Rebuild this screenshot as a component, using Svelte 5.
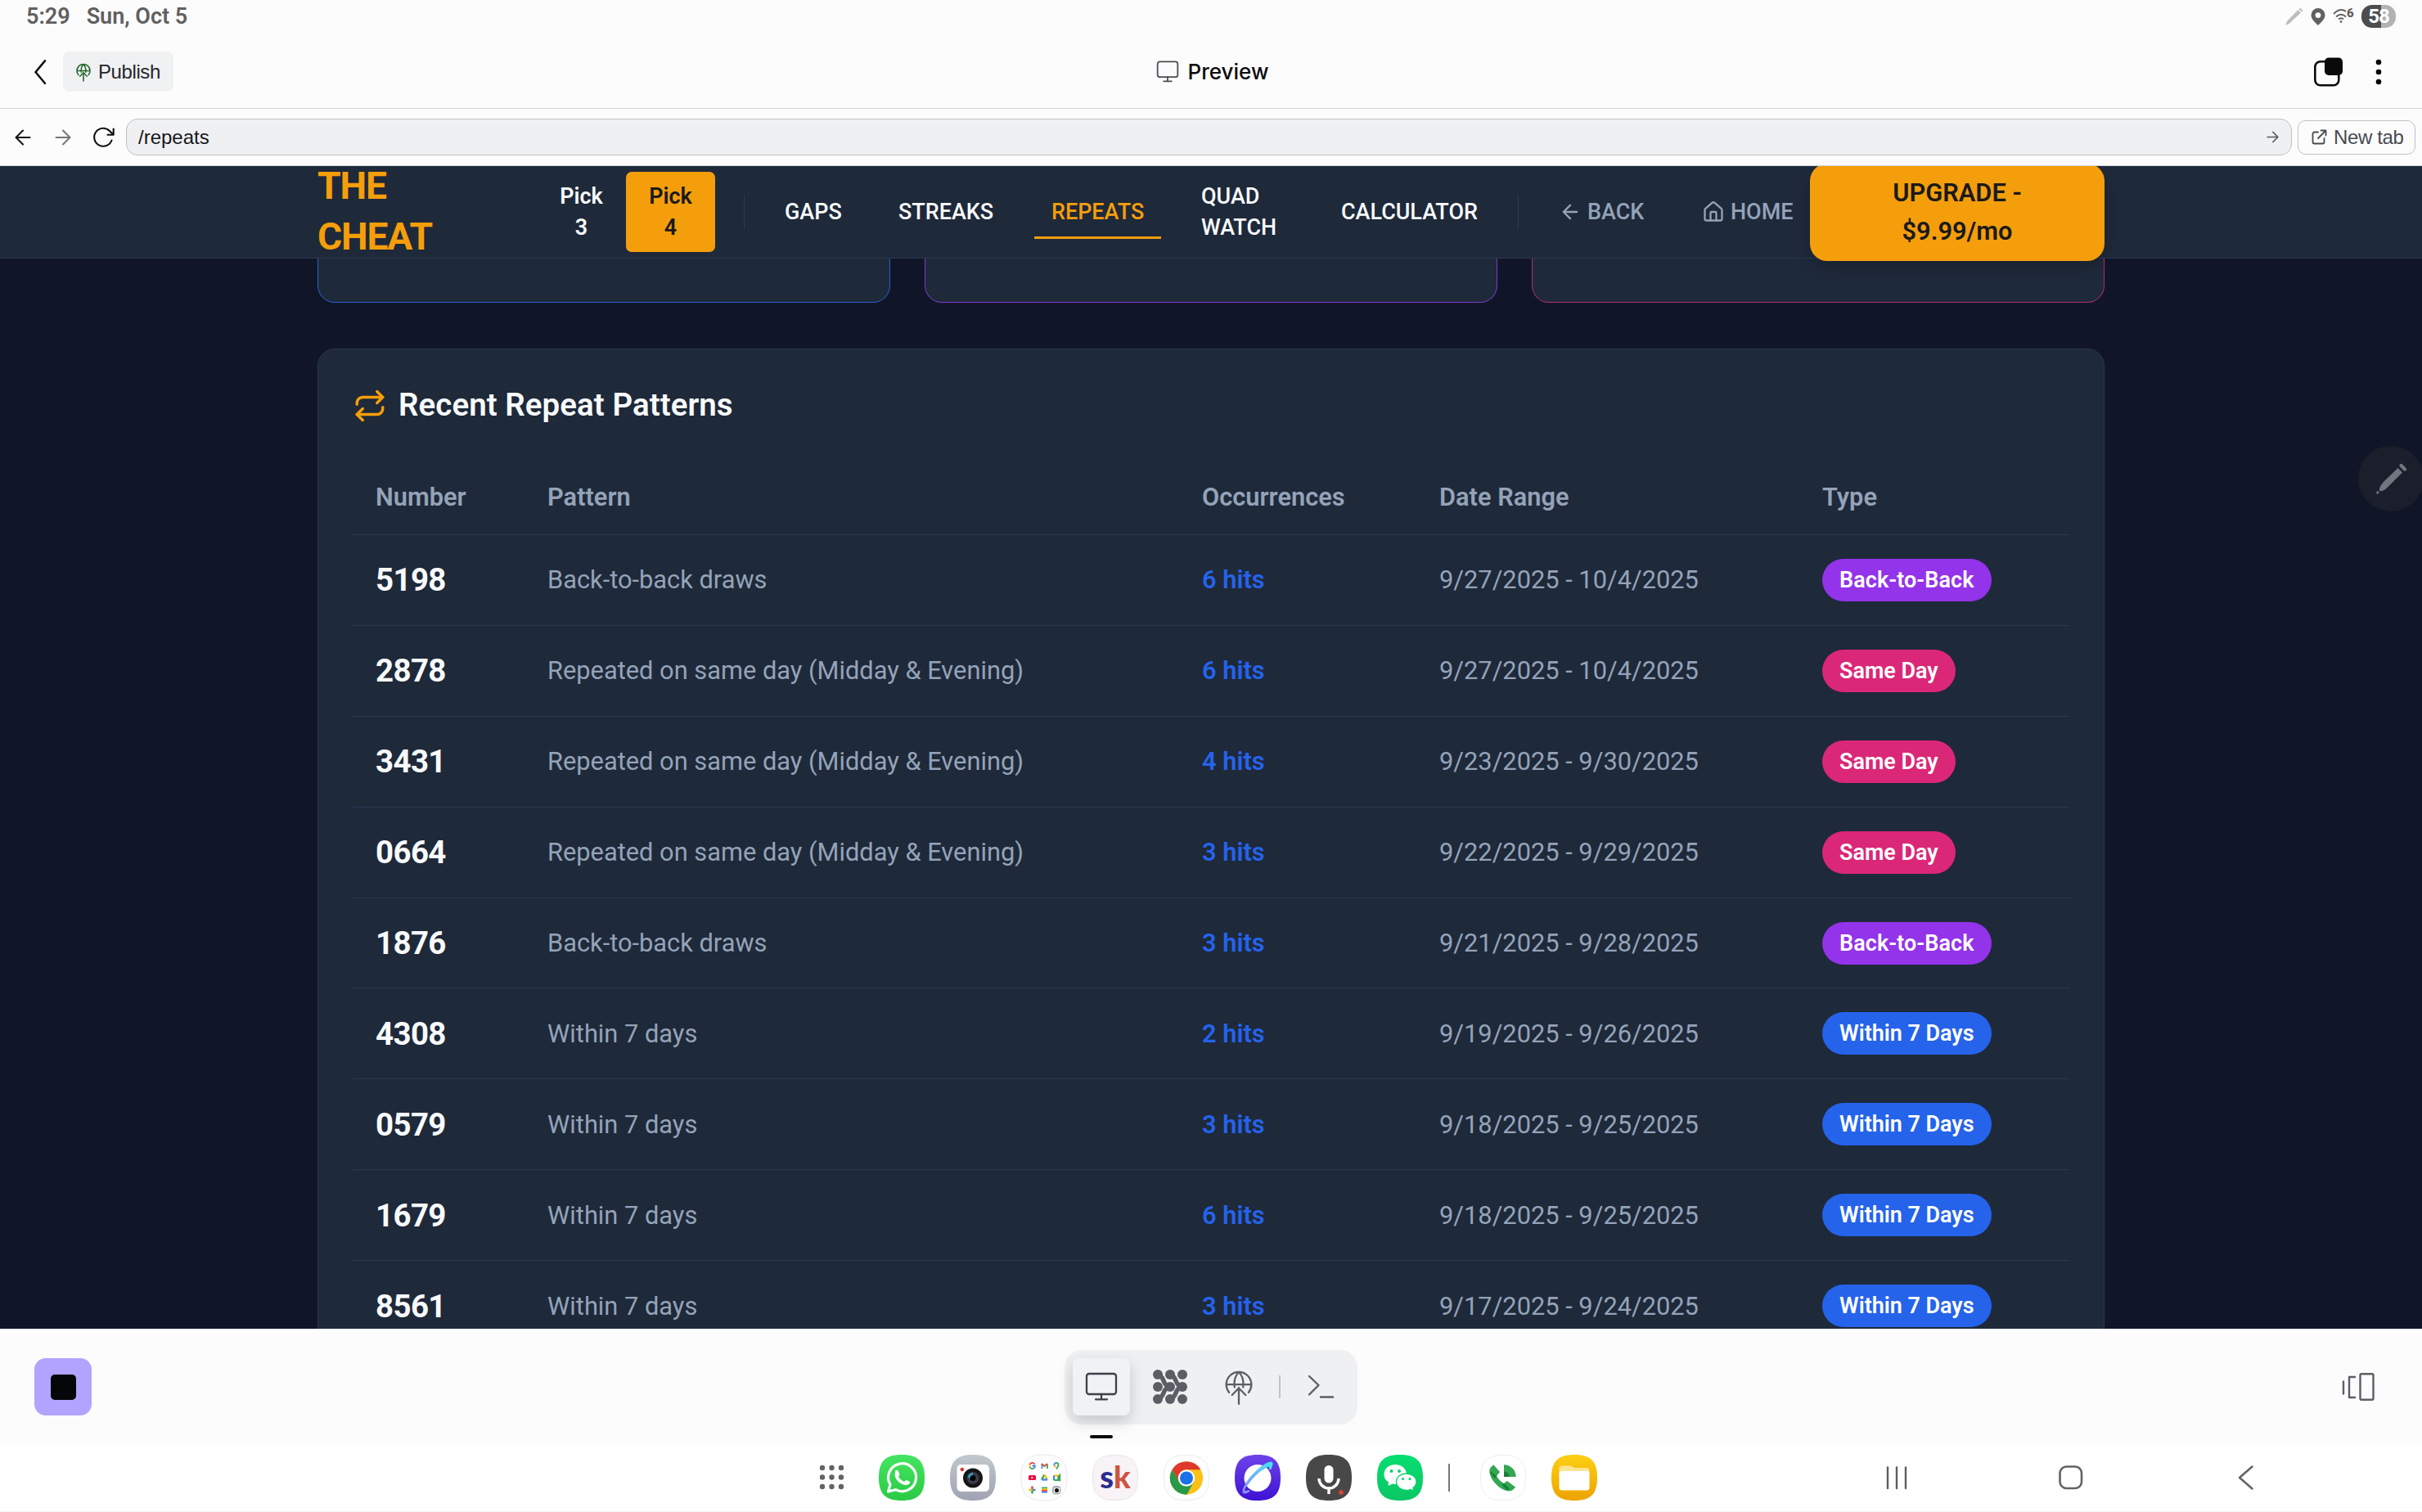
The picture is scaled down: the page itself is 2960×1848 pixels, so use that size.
<script>
  const pairs = [
    ['5198', 'b', 6, '9/27/2025 - 10/4/2025'],
    ['2878', 's', 6, '9/27/2025 - 10/4/2025'],
    ['3431', 's', 4, '9/23/2025 - 9/30/2025'],
    ['0664', 's', 3, '9/22/2025 - 9/29/2025'],
    ['1876', 'b', 3, '9/21/2025 - 9/28/2025'],
    ['4308', 'w', 2, '9/19/2025 - 9/26/2025'],
    ['0579', 'w', 3, '9/18/2025 - 9/25/2025'],
    ['1679', 'w', 6, '9/18/2025 - 9/25/2025'],
    ['8561', 'w', 3, '9/17/2025 - 9/24/2025']
  ];
  const kinds = {
    b: { text: 'Back-to-back draws', label: 'Back-to-Back', cls: 'purple' },
    s: { text: 'Repeated on same day (Midday & Evening)', label: 'Same Day', cls: 'pink' },
    w: { text: 'Within 7 days', label: 'Within 7 Days', cls: 'blue' }
  };
  const rows = pairs.map(([num, k, hits, range]) => ({ num, hits, range, ...kinds[k] }));
  const squircle = 'M28 0C48 0 56 8 56 28S48 56 28 56 0 48 0 28 8 0 28 0Z';
  const dots = [4, 15.5, 27];
</script>

{#snippet globe()}
  <path d="M5.8 16.6A8 8 0 1 1 18.2 16.6M4.2 11.5H19.8M9.3 13.2C8.8 9.5 9.6 6 12 3.6M14.7 13.2C15.2 9.5 14.4 6 12 3.6M12 24V13.6M7.7 18.2L12 13.8L16.3 18.2" />
{/snippet}
{#snippet monitor()}
  <rect x="1" y="1" width="36" height="25" rx="3" /><path d="M19 26V32M12 32.3H26" />
{/snippet}

<div class="screen">
  <div class="status">
    <span class="time">5:29</span><span class="date">Sun, Oct 5</span>
    <div class="status-icons">
      <svg class="s-pen" width="22" height="22" viewBox="0 0 22 22"><path d="M0 22L2 17L15.500 3L19 6.500L5 19.500ZM16.500 2L18 .5L21.500 4L20 5.500Z" fill="#bdbdbd" /></svg>
      <svg class="s-pin" width="18" height="21" viewBox="0 0 18 21"><path fill-rule="evenodd" fill="#606060" d="M9 0a8.500 8.500 0 0 1 8.500 8.500C17.500 13 13 17 9 21C5 17 .5 13 .5 8.500A8.500 8.500 0 0 1 9 0ZM9 5.200a3.400 3.400 0 1 0 0 6.800a3.400 3.400 0 0 0 0-6.800Z" /></svg>
      <div class="wifi">
        <svg width="20" height="18" viewBox="0 0 20 18" fill="none" stroke="#606060" stroke-width="2"><path d="M1 6Q9 -2 16 3M4 9.500Q10 4 16 9.500M7 12.500Q10 10 13 12.500" /><circle cx="10" cy="15.500" r="1" fill="#606060" stroke-width="1" /></svg>
        <b>6</b>
      </div>
      <div class="battery">58</div>
    </div>
  </div>

  <header class="appbar">
    <svg class="chev" width="16" height="26" viewBox="0 0 16 26" fill="none" stroke="#0b0b0b" stroke-width="2.600" stroke-linecap="round" stroke-linejoin="round"><path d="M14 -2.500L2.500 13L14 28.500" transform="translate(0 1.500) scale(1 .89)" /></svg>
    <div class="publish">
      <svg width="24" height="26" viewBox="0 0 24 26" fill="none" stroke="#27692e" stroke-width="1.600" stroke-linecap="round">{@render globe()}</svg>
      <span>Publish</span>
    </div>
    <div class="title">
      <svg width="26" height="24" viewBox="0 0 38 35" fill="none" stroke="#4a4c55" stroke-width="2.600" stroke-linecap="round"><rect x="1" y="-1" width="36" height="27.500" rx="4" /><path d="M19 26V33M12 34H26" /></svg>
      <span>Preview</span>
    </div>
    <svg class="multi" width="36" height="36" viewBox="0 0 36 36"><rect x="1.300" y="5.300" width="29" height="29" rx="6.500" fill="none" stroke="#0a0a0a" stroke-width="2.600" /><rect x="13" y=".5" width="22" height="21.500" rx="5" fill="#0a0a0a" /></svg>
    <svg class="dots" width="8" height="32" viewBox="0 0 8 32"><circle cx="4" cy="4" r="3.300" /><circle cx="4" cy="16" r="3.300" /><circle cx="4" cy="28" r="3.300" /></svg>
  </header>

  <div class="browser">
    <svg class="b-back" width="20" height="20" viewBox="0 0 20 20" fill="none" stroke="#111" stroke-width="2" stroke-linecap="round" stroke-linejoin="round"><path d="M18.500 10H1.500M10 1.500L1.500 10L10 18.500" /></svg>
    <svg class="b-fwd" width="20" height="20" viewBox="0 0 20 20" fill="none" stroke="#73757d" stroke-width="2" stroke-linecap="round" stroke-linejoin="round"><path d="M1.500 10H18.500M10 1.500L18.500 10L10 18.500" /></svg>
    <svg class="b-load" width="28" height="26" viewBox="0 0 28 26" fill="none" stroke="#111" stroke-width="2.100" stroke-linecap="round" stroke-linejoin="round"><path d="M23.500 16.500A11 11 0 1 1 21 5L25.500 9.500M25.700 2.500V9.700H18.500" /></svg>
    <div class="url">
      <span>/repeats</span>
      <svg width="15" height="15" viewBox="0 0 20 20" fill="none" stroke="#55575e" stroke-width="2.200" stroke-linecap="round" stroke-linejoin="round"><path d="M1.500 10H18.500M10.500 2L18.500 10L10.500 18" /></svg>
    </div>
    <div class="newtab">
      <svg width="19" height="19" viewBox="0 0 19 19" fill="none" stroke="#484a52" stroke-width="1.800" stroke-linecap="round" stroke-linejoin="round"><path d="M8 3.500H3.500A2 2 0 0 0 1.500 5.500V15.500A2 2 0 0 0 3.500 17.500H13.500A2 2 0 0 0 15.500 15.500V11M11.500 1.500H17.500V7.500M17 2L8 11" /></svg>
      <span>New tab</span>
    </div>
  </div>

  <main class="web">
    <nav class="nav">
      <div class="logo">THE<br />CHEAT</div>
      <div class="pick">Pick<br />3</div>
      <div class="pick on">Pick<br />4</div>
      <i class="sep first"></i>
      <div class="link gaps">GAPS</div>
      <div class="link streaks">STREAKS</div>
      <div class="link repeats">REPEATS</div>
      <div class="link quad">QUAD<br />WATCH</div>
      <div class="link calc">CALCULATOR</div>
      <i class="sep second"></i>
      <div class="util back">
        <svg width="28" height="28" viewBox="0 0 24 24" fill="none" stroke="currentColor" stroke-width="2" stroke-linecap="round" stroke-linejoin="round"><path d="M12 19L5 12L12 5M19 12H5" /></svg>
        BACK
      </div>
      <div class="util home">
        <svg width="28" height="28" viewBox="0 0 24 24" fill="none" stroke="currentColor" stroke-width="2" stroke-linecap="round" stroke-linejoin="round"><path d="M15 21v-8a1 1 0 0 0-1-1h-4a1 1 0 0 0-1 1v8" /><path d="M3 10a2 2 0 0 1 .709-1.528l7-5.999a2 2 0 0 1 2.582 0l7 5.999A2 2 0 0 1 21 10v9a2 2 0 0 1-2 2H5a2 2 0 0 1-2-2z" /></svg>
        HOME
      </div>
      <div class="upgrade">UPGRADE -<br />$9.99/mo</div>
    </nav>

    <div class="cards">
      <div class="card c1"></div>
      <div class="card c2"></div>
      <div class="card c3"></div>
    </div>

    <section class="panel">
      <h2>
        <svg width="42" height="42" viewBox="0 0 24 24" fill="none" stroke="#f59e0b" stroke-width="2" stroke-linecap="round" stroke-linejoin="round"><path d="m17 2 4 4-4 4" /><path d="M3 11v-1a4 4 0 0 1 4-4h14" /><path d="m7 22-4-4 4-4" /><path d="M21 13v1a4 4 0 0 1-4 4H3" /></svg>
        <span>Recent Repeat Patterns</span>
      </h2>
      <div class="row head"><span>Number</span><span>Pattern</span><span>Occurrences</span><span>Date Range</span><span>Type</span></div>
      {#each rows as r}
        <div class="row">
          <span class="num">{r.num}</span>
          <span>{r.text}</span>
          <span class="hits">{r.hits} hits</span>
          <span>{r.range}</span>
          <span><b class="pill {r.cls}">{r.label}</b></span>
        </div>
      {/each}
    </section>
  </main>

  <footer class="tools">
    <div class="stop"><i></i></div>
    <div class="dock">
      <div class="tile on"><svg width="38" height="35" viewBox="0 0 38 35" fill="none" stroke="#3d3f48" stroke-width="2.300" stroke-linecap="round">{@render monitor()}</svg></div>
      <div class="tile">
        <svg width="42" height="42" viewBox="0 0 42 42" fill="#5c5e66" stroke="#5c5e66" stroke-linecap="round">
          {#each [6, 21, 36] as y}{#each [6, 21, 36] as x}<circle cx={x} cy={y} r="6" stroke="none" />{/each}{/each}
          <path d="M6 6C15 8 11 19 20 21C11 23 15 34 6 36M21 6C30 8 26 19 35 21C26 23 30 34 21 36" fill="none" stroke-width="5.500" />
        </svg>
      </div>
      <div class="tile"><svg width="46" height="50" viewBox="0 0 24 26" fill="none" stroke="#5c5e66" stroke-width="1.200" stroke-linecap="round">{@render globe()}</svg></div>
      <i class="bar"></i>
      <div class="tile term"><svg width="32" height="30" viewBox="0 0 32 30" fill="none" stroke="#5c5e66" stroke-width="2.400" stroke-linecap="round" stroke-linejoin="round"><path d="M2 2L13.500 13L2 24.500M16 27.500H31" /></svg></div>
    </div>
    <svg class="split" width="40" height="34" viewBox="0 0 40 34" fill="none" stroke="#5c5e68" stroke-width="2.400" stroke-linecap="round" stroke-linejoin="round"><path d="M2 10.500V25.500M16 5H9V30H16" /><rect x="22.500" y="1.200" width="16" height="31.500" rx="1.500" /></svg>
  </footer>

  <div class="sysbar">
    <svg class="ico a-grid" width="31" height="31" viewBox="0 0 31 31" fill="#636363">{#each dots as y}{#each dots as x}<circle cx={x} cy={y} r="3.200" />{/each}{/each}</svg>
    <svg class="ico" width="56" height="56" viewBox="0 0 56 56">
      <defs><linearGradient id="wa" x2="0" y2="1"><stop stop-color="#45e561" /><stop offset="1" stop-color="#2bca45" /></linearGradient></defs>
      <path d={squircle} fill="url(#wa)" /><path d="M11.500 45L14 36.500A17 17 0 1 1 20.500 42.700Z" fill="none" stroke="#fff" stroke-width="3.200" stroke-linejoin="round" />
      <path d="M20 21C20 19 22 18 23.500 19.500L25.500 24C25 26 23.500 26 24.500 27.500C26.500 30.500 28 31.500 31 33C32 32.500 32.500 31 34 31L38 33C38.500 36 34.500 37.500 32 37C25 35.500 20 29.500 19.500 25Z" fill="#fff" />
    </svg>
    <svg class="ico" width="56" height="56" viewBox="0 0 56 56">
      <defs><linearGradient id="cam" x2="0" y2="1"><stop stop-color="#c0c9cc" /><stop offset="1" stop-color="#a0a2b3" /></linearGradient></defs>
      <path d={squircle} fill="url(#cam)" /><rect x="8.500" y="12" width="39.500" height="33" rx="5" fill="#fff" /><circle cx="28" cy="28.500" r="12" fill="#161616" /><circle cx="28" cy="28.500" r="7.500" fill="#3c3a48" /><path d="M22 28A6 6 0 0 1 28 22V26L25 29Z" fill="#2ba6c4" /><circle cx="28" cy="28.500" r="3.500" fill="#000" /><circle cx="14.800" cy="18" r="2.200" fill="#d93030" />
    </svg>
    <svg class="ico folder" width="58" height="58" viewBox="-1 -1 58 58">
      <path d={squircle} fill="#fdfdff" stroke="#e8e8ee" />
      <g transform="translate(8.500 8.500)" stroke-width="1.800" fill="none">
        <path d="M8 3A3.300 3.300 0 0 0 2 3.500" stroke="#ea4335" /><path d="M2 3.500V6.500" stroke="#fbbc05" /><path d="M2 6.500A3.400 3.400 0 0 0 7 8" stroke="#34a853" /><path d="M5 5H8.500A4 4 0 0 1 7 8" stroke="#4285f4" />
        <path d="M17 8.500V3" stroke="#4285f4" /><path d="M16.500 2.500L20 5.500L23.500 2.500" stroke="#ea4335" /><path d="M23.500 8.500V3" stroke="#34a853" />
        <path d="M34.500 1.200A3.300 3.300 0 0 1 37 5L34.500 9" stroke="#34a853" /><path d="M34.500 1.200A3.300 3.300 0 0 0 32 5" stroke="#4285f4" /><path d="M32 4.500L33.500 7" stroke="#fbbc05" />
        <rect x=".5" y="16.500" width="9" height="6" rx="1.500" fill="#f2083d" stroke="none" /><path d="M4 18L6.500 19.500L4 21Z" fill="#fff" stroke="none" />
        <path d="M19.800 16L16.500 22" stroke="#34a853" stroke-width="2.400" /><path d="M20 16L23.500 22" stroke="#fbbc05" stroke-width="2.400" /><path d="M17 22H23.500" stroke="#4285f4" stroke-width="2.400" />
        <path d="M31.500 17H37V19.500" stroke="#fbbc05" stroke-width="2.200" /><path d="M31.500 17V22.500" stroke="#4285f4" stroke-width="2.200" /><path d="M31.500 22.500H37V20.500L38.500 22V17L37 19" stroke="#34a853" stroke-width="2.200" />
        <path d="M5 34V30" stroke="#ea4335" stroke-width="2.500" /><path d="M5 34.500H9" stroke="#4285f4" stroke-width="2.500" /><path d="M5 34.500V39" stroke="#34a853" stroke-width="2.500" /><path d="M5 34.500H1" stroke="#fbbc05" stroke-width="2.500" />
        <path d="M16.500 32H23.500" stroke="#34a853" /><path d="M16.500 33.800H23.500" stroke="#fbbc05" /><path d="M16.500 35.500H23.500" stroke="#ea4335" /><path d="M16.500 37.200H23.500" stroke="#4285f4" />
        <rect x="29.500" y="29.500" width="10.500" height="10.500" rx="4" fill="#a9acb8" stroke="none" /><rect x="31.500" y="32" width="7" height="6" fill="#fff" stroke="none" /><circle cx="35" cy="35" r="2.600" fill="#111" stroke="none" />
      </g>
    </svg>
    <div class="ico sk"><svg width="56" height="56" viewBox="-.5 -.5 57 57"><path d={squircle} fill="#f8f3f7" stroke="#e8e2e8" /></svg><span><b>s</b><b class="k">k</b></span></div>
    <svg class="ico" width="56" height="56" viewBox="-.5 -.5 57 57">
      <path d={squircle} fill="#fff" stroke="#e9e9e9" />
      <circle cx="28" cy="28.500" r="20.500" fill="#fbc116" /><path d="M10.200 18.200A20.500 20.500 0 0 1 45.800 18.200H28A10.500 10.500 0 0 0 19 33.500Z" fill="#dd3a2c" /><path d="M10.200 18.200L19 33.500A10.500 10.500 0 0 0 37 33.500L28.500 49A20.500 20.500 0 0 1 10.200 18.200Z" fill="#28984a" /><circle cx="28" cy="28.500" r="10.300" fill="#fff" /><circle cx="28" cy="28.500" r="8.200" fill="#1b72e8" />
    </svg>
    <svg class="ico" width="56" height="56" viewBox="0 0 56 56">
      <defs><linearGradient id="net" x2="0" y2="1"><stop stop-color="#6f43ea" /><stop offset="1" stop-color="#3d12d2" /></linearGradient><linearGradient id="ring" x1="1" y1="0" x2="0" y2="1"><stop stop-color="#45e4f1" /><stop offset="1" stop-color="#8b8cf8" /></linearGradient></defs>
      <path d={squircle} fill="url(#net)" /><circle cx="28" cy="28.500" r="16.500" fill="#fff" /><path d="M43 18C46 11 46 9 43 10C36 11 18 27 12 40C9 47 11 48 18 44C10 48 9 43 15 36C23 25 32 18 38 15C43 12 44 14 43 18Z" fill="url(#ring)" stroke="url(#ring)" stroke-width="2.500" />
    </svg>
    <svg class="ico" width="56" height="56" viewBox="0 0 56 56"><path d={squircle} fill="#484848" /><rect x="22.500" y="13" width="11" height="21.500" rx="5.500" fill="#fff" /><path d="M16 29A12 12 0 0 0 40 29M28 41V48" fill="none" stroke="#fff" stroke-width="3.400" /><circle cx="43" cy="46" r="2.800" fill="#e34234" /></svg>
    <svg class="ico" width="56" height="56" viewBox="0 0 56 56">
      <defs><linearGradient id="wc" x2="0" y2="1"><stop stop-color="#08de70" /><stop offset="1" stop-color="#0ac665" /></linearGradient></defs>
      <path d={squircle} fill="url(#wc)" /><path d="M22 12C30 12 36 17 36 24S30 36 22 36L19 35.500L13.500 38L14 33.500C10 31 8.500 28 8.500 24C8.500 17 14 12 22 12Z" fill="#fff" /><path d="M35.500 23C42 23 48 27 48 33C48 36 46.500 38.500 44 40.500L44.500 44L40.500 42.500Q38 43.500 35.500 43.500C29 43.500 23.500 39 23.500 33S29 23 35.500 23Z" fill="#fff" stroke="#09d26b" stroke-width="1.300" />
      <g fill="#09d26b"><circle cx="17.500" cy="20" r="2" /><circle cx="27" cy="20" r="2" /><circle cx="31.500" cy="29.500" r="1.600" /><circle cx="40" cy="29.500" r="1.600" /></g>
    </svg>
    <i class="sys-sep"></i>
    <svg class="ico" width="56" height="56" viewBox="-.5 -.5 57 57"><path d={squircle} fill="#fff" stroke="#ececec" /><path d="M29 12A15 15 0 0 1 44 27H29Z" fill="#35a652" /><path d="M29 20A8 8 0 0 1 36 27H29Z" fill="#188038" /><path d="M12 16L16 12L24 21L20 26C22 30 25 33 29 35L33 32L43.500 40L39 44C34 46.500 26 43 20 37C13 30 9 21 12 16Z" fill="#35a652" /><path d="M12 20L20 26L17.500 29L12 22ZM29 35L36.500 42L32 43.500L26.500 37Z" fill="#188038" /></svg>
    <svg class="ico" width="56" height="56" viewBox="0 0 56 56">
      <defs><linearGradient id="fo" x2="0" y2="1"><stop stop-color="#fdcf14" /><stop offset="1" stop-color="#eda300" /></linearGradient></defs>
      <path d={squircle} fill="url(#fo)" /><path d="M9.500 26V17A3.500 3.500 0 0 1 13 13.500H23C26 13.500 26 16 29 16H43A3.500 3.500 0 0 1 46.500 19.500V26Z" fill="#fee491" /><rect x="9.500" y="20" width="37" height="23.500" rx="3.500" fill="#fff" />
    </svg>
    <svg class="ico n1" width="26" height="38" viewBox="0 0 26 38" stroke="#5e5e5e" stroke-width="2.400" stroke-linecap="round"><path d="M2 1.500V27M13 1.500V27M24 1.500V27" transform="translate(0 5)" /></svg>
    <svg class="ico n2" width="30" height="30" viewBox="0 0 30 30"><rect x="1.500" y="1.500" width="26.500" height="26.500" rx="8" fill="none" stroke="#636363" stroke-width="2.600" /></svg>
    <svg class="ico n3" width="20" height="30" viewBox="0 0 20 30" fill="none" stroke="#636363" stroke-width="2.500" stroke-linecap="round" stroke-linejoin="round"><path d="M17.500 1.500L2 15L17.500 28.500" /></svg>
  </div>

  <div class="float"><svg width="37" height="37" viewBox="0 0 37 37" fill="#727580"><path d="M4 33C3.500 29 6 25.500 9 22L26.500 5L32 10.500L14.500 28C11 31.500 8 34 4 33Z" /><circle cx="1.800" cy="35" r="1.700" /><path d="M30.500 2L35 6.500" stroke="#727580" stroke-width="4.200" stroke-linecap="round" /></svg></div>
</div>

<style>
  :global(body) { margin: 0; overflow: hidden; }
  .screen { position: relative; width: 2960px; height: 1848px; overflow: hidden; display: flex; flex-direction: column; background: #fcfcfc; font-family: Roboto, "Liberation Sans", sans-serif; box-sizing: border-box; }
  .screen :is(div, header, main, nav, footer, section, span, b, i) { box-sizing: border-box; }
  svg { display: block; flex: none; overflow: visible; }
  .status { height: 41px; flex: none; display: flex; align-items: center; padding: 0 32px 1px; color: #606060; font-size: 27px; font-weight: 600; }
  .date { margin-left: 20px; }
  .status-icons { margin-left: auto; display: flex; align-items: center; }
  .s-pin { margin-left: 9px; }
  .wifi { display: flex; margin-left: 9px; width: 25px; height: 22px; align-items: center; }
  .wifi b { font-size: 15px; line-height: 12px; margin: -9px 0 0 -3px; }
  .battery { width: 42px; height: 28px; margin-left: 10px; border-radius: 13px; background: linear-gradient(90deg, #4d4d4d 58%, #b2b2b2 58%); color: #fff; font-size: 24px; font-weight: 700; line-height: 28px; text-align: center; letter-spacing: -1px; }

  .appbar { height: 92px; flex: none; display: flex; align-items: center; border-bottom: 1px solid #d3d5d6; padding: 2px 49px 0 41px; position: relative; }
  .publish { display: flex; align-items: center; width: 135px; height: 49px; margin-left: 20px; padding-left: 13px; gap: 6px; border-radius: 8px; background: #f0f1f3; color: #25272c; font-family: "Liberation Sans", sans-serif; font-size: 24px; letter-spacing: -.4px; }
  .title { display: flex; align-items: center; gap: 12px; margin: 0 auto; padding-right: 76px; font-family: Inter, sans-serif; font-size: 26px; font-weight: 500; color: #0b0b0b; }
  .dots { margin-left: 39px; }

  .browser { height: 70px; flex: none; display: flex; align-items: center; padding: 0 8px 0 18px; border-bottom: 1px solid #ced4da; font-size: 24px; }
  .b-fwd { margin-left: 29px; }
  .b-load { margin-left: 26px; }
  .url { flex: 1; height: 45px; margin-left: 13px; padding: 0 15px 0 14px; display: flex; align-items: center; justify-content: space-between; border: 1px solid #bfc1c6; border-radius: 14px; background: #eff0f2; color: #16171a; font-family: "Liberation Sans", sans-serif; }
  .newtab { width: 144px; height: 42px; margin-left: 7px; padding-left: 16px; display: flex; align-items: center; gap: 8px; border: 1px solid #bfc1c6; border-radius: 10px; color: #484a52; font-family: "Liberation Sans", sans-serif; letter-spacing: -.35px; white-space: nowrap; }

  .web { height: 1421px; flex: none; overflow: hidden; background: #101628; }
  .nav { height: 113px; padding: 0 388px; display: flex; align-items: center; position: relative; border-bottom: 1px solid #2b3850; background: #1e293a; color: #f8fafc; font-size: 26.950px; line-height: 38.500px; font-weight: 500; }
  .nav > * { flex: none; }
  .logo { width: 268px; margin-top: -1px; color: #f59e0b; font-size: 46.200px; line-height: 61.600px; font-weight: 700; letter-spacing: -1.150px; }
  .pick { width: 109px; padding: 10.500px 0; text-align: center; border-radius: 7px; font-weight: 600; }
  .pick.on { background: #f59e0b; color: #1a1a1a; }
  .sep { width: 1px; height: 42px; background: #2d3b52; }
  .first { margin: 0 28px 0 35px; }
  .link { padding: 14px 0 14px 21px; }
  .gaps { width: 139px; }
  .streaks { width: 187px; }
  .repeats { width: 155px; color: #f59e0b; border-bottom: 3px solid #f59e0b; padding-bottom: 11px; }
  .quad { width: 143px; margin-left: 28px; }
  .calc { width: 237px; margin-left: 28px; }
  .util { display: flex; align-items: center; gap: 7px; color: #94a3b8; }
  .back { margin-left: 49px; width: 175px; }
  .home { width: 132px; }
  .upgrade { width: 360px; margin: 1px 0 0 auto; padding: 13px 0; text-align: center; border-radius: 21px; background: #f59e0b; color: #1a1a1a; font-size: 30.800px; line-height: 46.200px; font-weight: 600; box-shadow: 0 7px 18px rgba(0, 0, 0, .2); }

  .cards { display: grid; grid-template-columns: repeat(3, 1fr); gap: 42px; padding: 0 388px; height: 54px; }
  .card { border: 1px solid; border-top: 0; border-radius: 0 0 21px 21px; background: #1e293a; }
  .c1 { border-color: #2a5fc9; }
  .c2 { border-color: #7e3acb; }
  .c3 { border-color: #b0306f; }

  .panel { margin: 56px 388px 0; height: 1300px; padding: 42px; border: 1px solid #29374b; border-radius: 21px; background: #1e293a; color: #94a3b8; font-size: 30.800px; }
  h2 { display: flex; align-items: center; gap: 14px; height: 54px; margin: 0 0 38px; color: #f8fafc; font-size: 38.500px; font-weight: 600; letter-spacing: .05px; }
  h2 span { margin-top: -4px; }
  .row { display: grid; grid-template-columns: 210px 800px 290px 468px 1fr; align-items: center; height: 110.900px; border-bottom: 1px solid #2b3a52; white-space: nowrap; }
  .row > span { padding-left: 28px; }
  .row.head { height: 93px; padding-top: 1px; font-weight: 600; }
  .num { color: #f8fafc; font-size: 38.500px; font-weight: 700; letter-spacing: -.65px; }
  .hits { color: #2563eb; font-weight: 600; }
  .pill { display: inline-block; vertical-align: middle; height: 52px; padding: 0 21px; border-radius: 26px; color: #fff; font-size: 26.950px; line-height: 52px; font-weight: 600; }
  .purple { background: #9333ea; letter-spacing: .1px; }
  .pink { background: #db2777; }
  .blue { background: #2563eb; }

  .tools { height: 140px; flex: none; display: flex; align-items: center; justify-content: space-between; padding: 0 58px 0 42px; position: relative; }
  .stop { width: 70px; height: 70px; margin-top: 2px; display: grid; place-items: center; border-radius: 14px; background: #b1a3ff; }
  .stop i { width: 31px; height: 31px; border-radius: 5px; background: #050608; }
  .dock { display: flex; align-items: center; gap: 14px; width: 358px; height: 91px; margin: 2px 14px 0 0; padding: 0 10px; border-radius: 21px; background: #eff0f2; }
  .tile { width: 70px; height: 70px; flex: none; display: grid; place-items: center; position: relative; }
  .tile.on { border-radius: 7px; background: #f1f2f4; box-shadow: 0 7px 18px rgba(0, 0, 0, .18); }
  .tile.on::after { content: ""; position: absolute; left: 21px; top: 94px; width: 28px; height: 4px; border-radius: 2px; background: #0a0a0a; }
  .bar { width: 2px; height: 28px; background: #c3c4c7; }
  .split { margin-top: 2px; }

  .sysbar { height: 84px; flex: none; display: flex; align-items: center; gap: 31px; padding: 0 0 0 1001px; background: #fff; border-bottom: 1px solid #f4f4f4; }
  .ico { flex: none; }
  .a-grid { margin-right: 11px; }
  .folder { margin: 0 -1px; }
  .sk { position: relative; display: grid; place-items: center; }
  .sk span { position: absolute; top: 4px; font-family: Lato, sans-serif; font-size: 38px; line-height: 44px; color: #2c2c8f; }
  .sk .k { color: #cc5540; }
  .sk b { font-weight: 900; }
  .sys-sep { width: 2px; height: 34px; margin-right: 6px; background: #777; }
  .n1 { margin-left: 322px; }
  .n2 { margin-left: 154px; }
  .n3 { margin-left: 158px; }
  .float { position: absolute; left: 2882px; top: 545px; width: 80px; height: 80px; border-radius: 40px; display: grid; place-items: center; background: #1b1f2b; }
</style>
